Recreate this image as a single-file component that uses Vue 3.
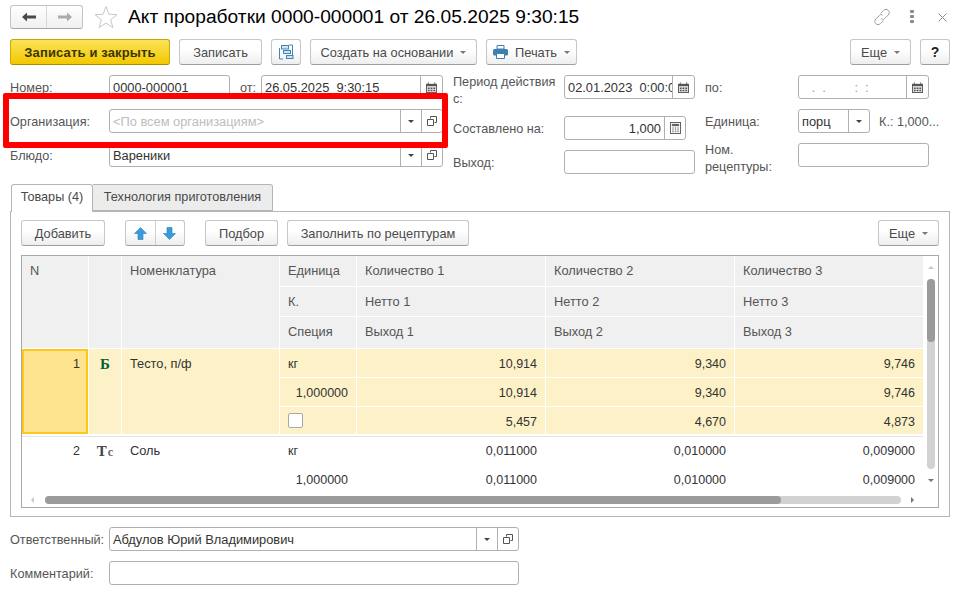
<template>
  <div class="page">
    <header class="head">
      <div class="nav">
        <button class="nav-btn">
          <svg width="14" height="10" viewBox="0 0 14 10"><path d="M0 5 5 0.5V3.5H14V6.5H5V9.5Z" fill="#4a4a4a" /></svg>
        </button>
        <button class="nav-btn">
          <svg width="14" height="10" viewBox="0 0 14 10"><path d="M14 5 9 0.5V3.5H0V6.5H9V9.5Z" fill="#ababab" /></svg>
        </button>
      </div>
      <svg class="star" width="24" height="24" viewBox="0 0 24 24"><path d="M12 1.5 14.9 9.2 23 9.6 16.7 14.7 18.8 22.6 12 18.1 5.200 22.600 7.300 14.700 1 9.600 9.100 9.200Z" fill="none" stroke="#c8c8c8" /></svg>
      <h1 class="title">Акт проработки 0000-000001 от 26.05.2025 9:30:15</h1>
      <div class="win-icons">
        <svg width="18" height="18" viewBox="0 0 18 18" fill="none" stroke="#a0a0a0" stroke-width="1"><path d="M7.500 5.500 10.500 2.500C12 1 14 1 15.300 2.400 16.600 3.800 16.500 5.700 15.200 7L11.500 10.700C10.300 11.800 9 11.600 8.200 10.600" /><path d="M10.500 12.500 7.500 15.500C6 17 4 17 2.700 15.600 1.400 14.200 1.500 12.300 2.800 11L6.500 7.300C7.700 6.200 9 6.400 9.800 7.400" /></svg>
        <svg class="dots" width="4" height="14" viewBox="0 0 4 14"><g fill="#8a8a8a"><rect width="4" height="3" y="0" rx="1" /><rect width="4" height="3" y="5" rx="1" /><rect width="4" height="3" y="10" rx="1" /></g></svg>
        <svg width="9" height="9" viewBox="0 0 9 9"><path d="M.5.500 8.500 8.500M8.500.500.500 8.500" stroke="#8a8a8a" /></svg>
      </div>
    </header>

    <div class="toolbar">
      <button class="btn primary w160">Записать и закрыть</button>
      <button class="btn w83">Записать</button>
      <button class="btn w30">
        <svg width="16" height="16" viewBox="0 0 16 16" fill="#cfe3f3" stroke="#3f87b8"><path d="M1.500 4V15H5M14.500 12V1H11" fill="none" /><rect x="3.500" y="1.500" width="7" height="3.500" /><rect x="5.500" y="6.500" width="7" height="3" /><rect x="8.500" y="11.500" width="6.500" height="3" /></svg>
      </button>
      <button class="btn w167">Создать на основании<i class="caret"></i></button>
      <button class="btn w91">
        <svg class="print" width="15" height="14" viewBox="0 0 15 14"><path d="M4 .500H11V4H4Z" fill="#fff" stroke="#3d7fae" /><rect y="4" width="15" height="6.500" rx="1.500" fill="#3d7fae" /><path d="M3.500 8.500H11.500V13.500H3.500Z" fill="#fff" stroke="#3d7fae" /></svg>Печать<i class="caret"></i>
      </button>
      <button class="btn w61 push">Еще<i class="caret"></i></button>
      <button class="btn w30 help">?</button>
    </div>

    <section class="form">
      <div class="col col-main">
        <div class="line">
          <label class="lbl w99">Номер:</label>
          <div class="field w121"><span class="val">0000-000001</span></div>
          <label class="lbl from">от:</label>
          <div class="field w182">
            <span class="val">26.05.2025&nbsp; 9:30:15</span>
            <span class="addon a22"><svg class="ico" width="11" height="11" viewBox="0 0 12 12"><use href="#cal" /></svg></span>
          </div>
        </div>
        <div class="line">
          <label class="lbl w99">Организация:</label>
          <div class="field w334">
            <span class="val ghost">&lt;По всем организациям&gt;</span>
            <span class="addon a21"><i class="caret dark"></i></span>
            <span class="addon a21"><svg width="10" height="10" viewBox="0 0 10 10" fill="none" stroke="#555"><path d="M3.500 2.500V.500H9.500V6.500H7.500M.500 3.500H6.500V9.500H.500Z" /></svg></span>
          </div>
        </div>
        <div class="line">
          <label class="lbl w99">Блюдо:</label>
          <div class="field w334">
            <span class="val">Вареники</span>
            <span class="addon a21"><i class="caret dark"></i></span>
            <span class="addon a21"><svg width="10" height="10" viewBox="0 0 10 10" fill="none" stroke="#555"><path d="M3.500 2.500V.500H9.500V6.500H7.500M.500 3.500H6.500V9.500H.500Z" /></svg></span>
          </div>
        </div>
      </div>

      <div class="col col-mid">
        <div class="line">
          <label class="lbl lbl-two w111">Период действия<br>с:</label>
          <div class="field w131">
            <span class="val clip">02.01.2023&nbsp; 0:00:00</span>
            <span class="addon a22"><svg class="ico" width="11" height="11" viewBox="0 0 12 12"><use href="#cal" /></svg></span>
          </div>
        </div>
        <div class="line mid-2">
          <label class="lbl w111">Составлено на:</label>
          <div class="field w122">
            <span class="val right">1,000</span>
            <span class="addon a21"><svg width="11" height="12" viewBox="0 0 12 13" fill="none" stroke="#555"><rect x=".5" y=".5" width="11" height="12" /><path d="M2.500 2.500H9.500V4H2.500Z" fill="#555" /><path d="M2.500 6.500H4M5.300 6.500H6.800M8 6.500H9.500M2.500 8.500H4M5.300 8.500H6.800M8 8.500H9.500M2.500 10.500H4M5.300 10.500H6.800M8 10.500H9.500" /></svg></span>
          </div>
        </div>
        <div class="line">
          <label class="lbl w111">Выход:</label>
          <div class="field w131"></div>
        </div>
      </div>

      <div class="col">
        <div class="line">
          <label class="lbl w93">по:</label>
          <div class="field w131">
            <span class="val date-empty">&nbsp;. &nbsp;. &nbsp; &nbsp; &nbsp; &nbsp;: &nbsp;:</span>
            <span class="addon a22"><svg class="ico" width="11" height="11" viewBox="0 0 12 12"><use href="#cal" /></svg></span>
          </div>
        </div>
        <div class="line">
          <label class="lbl w93">Единица:</label>
          <div class="field w72">
            <span class="val">порц</span>
            <span class="addon a21"><i class="caret dark"></i></span>
          </div>
          <span class="lbl coef">К.: 1,000...</span>
        </div>
        <div class="line">
          <label class="lbl lbl-rec w93">Ном.<br>рецептуры:</label>
          <div class="field w131"></div>
        </div>
      </div>
    </section>

    <div class="tabs">
      <div class="tab active">Товары (4)</div>
      <div class="tab">Технология приготовления</div>
    </div>

    <section class="panel">
      <div class="panel-bar">
        <button class="btn w84">Добавить</button>
        <div class="pair">
          <button class="pair-btn">
            <svg width="13" height="13" viewBox="0 0 13 13"><path d="M6.500.500 12.500 6.500H9V12.500H4V6.500H.5Z" fill="#3a9bdc" stroke="#2a7fb8" stroke-width=".6" /></svg>
          </button>
          <button class="pair-btn">
            <svg width="13" height="13" viewBox="0 0 13 13"><path d="M6.500 12.500 12.500 6.500H9V.500H4V6.500H.5Z" fill="#3a9bdc" stroke="#2a7fb8" stroke-width=".6" /></svg>
          </button>
        </div>
        <button class="btn w73">Подбор</button>
        <button class="btn w182">Заполнить по рецептурам</button>
        <button class="btn w61 push">Еще<i class="caret"></i></button>
      </div>

      <div class="table">
        <div class="table-main">
          <div class="view">
            <div class="grid">
              <div class="hd tall">N</div>
              <div class="hd tall"></div>
              <div class="hd tall">Номенклатура</div>
              <template v-for="(row, r) in headRows" :key="r">
                <div v-for="c in row" :key="c" class="hd">{{ c }}</div>
              </template>
            </div>
            <div class="grid rows first">
              <div class="cell num-cell current tall">1</div>
              <div class="cell kind tall sel green">Б</div>
              <div class="cell name tall sel">Тесто, п/ф</div>
              <template v-for="(row, r) in firstRows" :key="r">
                <div class="cell sel" :class="{ num: r === 1 }">
                  <i v-if="r === 2" class="check"></i>
                  <template v-else>{{ row[0] }}</template>
                </div>
                <div v-for="(v, i) in row.slice(1)" :key="i" class="cell sel num">{{ v }}</div>
              </template>
            </div>
            <div class="grid rows second">
              <div class="cell num-plain tall">2</div>
              <div class="cell kind tall">Т<span class="kind-sm">с</span></div>
              <div class="cell name tall">Соль</div>
              <template v-for="(row, r) in secondRows" :key="r">
                <div class="cell" :class="{ num: r === 1 }">{{ row[0] }}</div>
                <div v-for="(v, i) in row.slice(1)" :key="i" class="cell num">{{ v }}</div>
              </template>
            </div>
          </div>
          <div class="vscroll">
            <i class="tri up"></i>
            <div class="vtrack"><div class="vthumb"></div></div>
            <i class="tri down"></i>
          </div>
        </div>
        <div class="hscroll">
          <i class="tri left"></i>
          <div class="htrack"><div class="hthumb"></div></div>
          <i class="tri right"></i>
        </div>
      </div>
    </section>

    <footer class="foot">
      <div class="line">
        <label class="lbl w99">Ответственный:</label>
        <div class="field w410">
          <span class="val">Абдулов Юрий Владимирович</span>
          <span class="addon a21"><i class="caret dark"></i></span>
          <span class="addon a21"><svg width="10" height="10" viewBox="0 0 10 10" fill="none" stroke="#555"><path d="M3.500 2.500V.500H9.500V6.500H7.500M.500 3.500H6.500V9.500H.500Z" /></svg></span>
        </div>
      </div>
      <div class="line">
        <label class="lbl w99">Комментарий:</label>
        <div class="field w410"></div>
      </div>
    </footer>

    <div class="red-frame"></div>

    <svg class="defs" width="0" height="0">
      <symbol id="cal" viewBox="0 0 12 12">
        <path d="M0 2H12V12H0Z" fill="#555" />
        <path d="M2.500 0.500V3M9.500 .5V3" stroke="#555" />
        <path d="M1 4.500H11V11H1Z" fill="#e8e8e8" />
        <path d="M2 6H4V7.500H2ZM5 6H7V7.500H5ZM8 6H10V7.500H8ZM2 8.500H4V10H2ZM5 8.500H7V10H5ZM8 8.500H10V10H8Z" fill="#555" />
      </symbol>
    </svg>
  </div>
</template>

<script setup>
const headRows = [
  ['Единица', 'Количество 1', 'Количество 2', 'Количество 3'],
  ['К.', 'Нетто 1', 'Нетто 2', 'Нетто 3'],
  ['Специя', 'Выход 1', 'Выход 2', 'Выход 3']
]

const firstRows = [
  ['кг', '10,914', '9,340', '9,746'],
  ['1,000000', '10,914', '9,340', '9,746'],
  ['', '5,457', '4,670', '4,873']
]

const secondRows = [
  ['кг', '0,011000', '0,010000', '0,009000'],
  ['1,000000', '0,011000', '0,010000', '0,009000'],
  ['', '', '', '']
]
</script>

<style>
html, body { margin: 0; background: #fff; }
</style>

<style scoped>
.page {
  position: relative;
  width: 963px;
  height: 594px;
  overflow: hidden;
  padding: 5px 13px 0 10px;
  box-sizing: border-box;
  font-family: "Liberation Sans", Arial, sans-serif;
  font-size: 13px;
  color: #333;
  background: #fff;
}

button { font-family: inherit; margin: 0; }

.head { display: flex; align-items: center; height: 24px; }

.nav {
  display: flex;
  width: 73px;
  height: 24px;
  box-sizing: border-box;
  border: 1px solid #c4c4c4;
  border-bottom-color: #a8a8a8;
  border-radius: 3px;
  background: linear-gradient(#fff, #f0f0f0);
}
.nav-btn {
  flex: 1;
  padding: 0;
  border: 0;
  background: none;
  display: flex;
  align-items: center;
  justify-content: center;
}
.nav-btn + .nav-btn { border-left: 1px solid #d8d8d8; }

.star { margin-left: 11px; flex: none; }

.title {
  margin: 0 0 0 10px;
  font-size: 19.200px;
  font-weight: 400;
  color: #000;
  white-space: nowrap;
}

.win-icons { margin-left: auto; display: flex; align-items: center; margin-right: 3px; }
.dots { margin: 0 24px 0 19px; }

.toolbar { display: flex; gap: 9px; height: 26px; margin-top: 10px; }

.btn {
  height: 26px;
  padding: 0;
  box-sizing: border-box;
  display: inline-flex;
  align-items: center;
  justify-content: center;
  flex: none;
  border: 1px solid #c6c6c6;
  border-bottom-color: #9f9f9f;
  border-radius: 3px;
  background: linear-gradient(#fff 40%, #eeeeee);
  color: #4a4a4a;
  font-size: 12.800px;
  white-space: nowrap;
}
.primary {
  border-color: #c9a800;
  border-bottom-color: #a88c00;
  background: linear-gradient(#fbe35a, #f3c800);
  color: #3d3500;
  font-weight: 700;
  font-size: 13px;
  letter-spacing: .15px;
}
.help { color: #222; font-weight: 700; font-size: 14px; }
.print { margin-right: 7px; }
.push { margin-left: auto; }

.w30 { width: 30px; }
.w61 { width: 61px; }
.w73 { width: 73px; }
.w83 { width: 83px; }
.w84 { width: 84px; }
.w91 { width: 91px; }
.w160 { width: 160px; }
.w167 { width: 167px; }
.w182 { width: 182px; }

.caret {
  display: inline-block;
  margin-left: 7px;
  border: 3px solid transparent;
  border-top: 3px solid #777;
  border-bottom: 0;
}
.caret.dark { margin: 0; border-top-color: #444; }

.form { display: flex; margin-top: 10px; height: 100px; }

.col { display: flex; flex-direction: column; gap: 10px; }
.col-main { width: 443px; }
.col-mid { width: 252px; margin-right: 0; gap: 0; }
.mid-2 { margin: 17px 0 10px; }

.line { display: flex; align-items: center; height: 24px; }

.lbl {
  flex: none;
  padding-top: 2px;
  color: #555;
  font-size: 12.700px;
  white-space: nowrap;
  line-height: 17px;
}
.w93 { width: 93px; }
.w99 { width: 99px; }
.w111 { width: 111px; }
.from { width: 21px; margin-left: 10px; box-sizing: border-box; }
.col-mid .lbl-two { margin-top: 6px; }
.lbl-rec { margin-top: 6px; }
.coef { margin-left: 9px; }

.field {
  flex: none;
  display: flex;
  align-items: stretch;
  height: 24px;
  box-sizing: border-box;
  border: 1px solid #b0b0b0;
  border-radius: 3px;
  background: #fff;
}
.w72 { width: 72px; }
.w121 { width: 121px; }
.w122 { width: 122px; }
.w131 { width: 131px; }
.w334 { width: 334px; }
.w410 { width: 410px; }

.val {
  flex: 1;
  min-width: 0;
  padding: 0 4px 0 3px;
  font-size: 12.850px;
  line-height: 24px;
  color: #333;
  white-space: nowrap;
  overflow: hidden;
}
.ghost { color: #bdbdbd; }
.right { text-align: right; padding-right: 3px; }
.date-empty { color: #999; padding-left: 9px; }

.addon {
  flex: none;
  display: flex;
  align-items: center;
  justify-content: center;
  border-left: 1px solid #b0b0b0;
}
.a21 { width: 20px; }
.a22 { width: 21px; }
.ico { display: block; }

.tabs { display: flex; margin: 9px 0 0 1px; height: 28px; font-size: 12.700px; position: relative; z-index: 1; }
.tab {
  width: 180px;
  box-sizing: border-box;
  height: 27px;
  border: 1px solid #b5b5b5;
  border-left: 0;
  border-radius: 0 3px 0 0;
  background: #ececec;
  line-height: 25px;
  text-align: center;
  color: #4a4a4a;
}
.tab.active {
  width: 82px;
  height: 28px;
  border-left: 1px solid #b5b5b5;
  border-bottom: 0;
  border-radius: 3px 3px 0 0;
  background: #fff;
}

.panel {
  height: 306px;
  margin-top: -1px;
  box-sizing: border-box;
  padding: 8px 10px;
  border: 1px solid #b5b5b5;
}

.panel-bar { display: flex; gap: 9px; height: 26px; }

.pair {
  display: flex;
  width: 60px;
  height: 26px;
  margin: 0 11px;
  box-sizing: border-box;
  border: 1px solid #c6c6c6;
  border-bottom-color: #9f9f9f;
  border-radius: 3px;
  background: linear-gradient(#fff 40%, #eeeeee);
}
.pair-btn {
  flex: 1;
  padding: 0;
  border: 0;
  background: none;
  display: flex;
  align-items: center;
  justify-content: center;
}
.pair-btn + .pair-btn { border-left: 1px solid #d0d0d0; }

.table {
  height: 253px;
  margin-top: 9px;
  box-sizing: border-box;
  border: 1px solid #a8a8a8;
  display: flex;
  flex-direction: column;
}
.table-main { display: flex; height: 234px; }
.view { width: 901px; overflow: hidden; flex: none; }

.grid {
  display: grid;
  grid-template-columns: 66px 32px 157px 76px 188px 188px 188px;
  grid-template-rows: 30px 29px 31px;
  gap: 1px;
  padding-bottom: 1px;
  box-sizing: content-box;
  width: 901px;
  margin-top: 0;
  background: #fff;
}
.tall { grid-row: 1 / span 3; }

.hd {
  background: #f0f0f0;
  padding: 0 8px;
  line-height: 29px;
  font-size: 12.800px;
  color: #555;
  white-space: nowrap;
}
.tall.hd { grid-row: 1 / span 3; }

.rows { grid-template-rows: 28px 28px 27px; }
.first { padding-bottom: 2px; border-bottom: 1px solid #e3e3e3; }
.first .cell { line-height: 30px; }
.first .current { line-height: 26px; }
.second { margin-top: 0; }

.cell {
  padding: 0 8px;
  line-height: 28px;
  font-size: 12.500px;
  color: #333;
  white-space: nowrap;
  min-width: 0;
}
.name { font-size: 12.800px; }
.sel { background: #fdf2c7; }
.num { text-align: right; }

.current {
  background: #fee48f;
  border: 2px solid #fcc820;
  box-sizing: border-box;
  text-align: right;
  padding-right: 6px;
}
.num-plain { text-align: right; }

.kind {
  padding: 0;
  text-align: center;
  font-family: "Liberation Serif", serif;
  font-weight: 700;
  font-size: 15px;
  color: #444;
}
.kind-sm { font-size: 12px; margin-left: 1px; color: #666; }
.green { color: #0b5c39; }

.check {
  display: block;
  width: 15px;
  height: 15px;
  margin-top: 6px;
  box-sizing: border-box;
  border: 1px solid #a8a8a8;
  border-radius: 2px;
  background: #fff;
}

.vscroll {
  width: 15px;
  flex: none;
  display: flex;
  flex-direction: column;
  align-items: center;
  padding-top: 10px;
  box-sizing: border-box;
}
.vtrack {
  width: 8px;
  height: 190px;
  margin: 10px 0;
  border-radius: 4px;
  background: #d2d2d2;
}
.vthumb { height: 63px; border-radius: 4px; background: #9b9b9b; }

.hscroll {
  display: flex;
  align-items: center;
  height: 17px;
  padding: 2px 0 0 9px;
  box-sizing: border-box;
}
.htrack {
  width: 856px;
  height: 8px;
  margin-left: 11px;
  border-radius: 4px;
  background: #d2d2d2;
}
.hthumb { width: 736px; height: 8px; border-radius: 4px; background: #9b9b9b; }

.tri { display: block; width: 0; height: 0; border: 3px solid transparent; flex: none; }
.tri.up { border-top: 0; border-bottom: 3px solid #c8c8c8; }
.tri.down { border-bottom: 0; border-top: 3px solid #777; }
.tri.left { border-left: 0; border-right: 3px solid #c8c8c8; }
.tri.right { border-right: 0; border-left: 3px solid #777; margin-left: 10px; }

.foot { display: flex; flex-direction: column; gap: 10px; margin-top: 10px; }

.red-frame {
  position: absolute;
  left: 3px;
  top: 93px;
  width: 445px;
  height: 55px;
  box-sizing: border-box;
  border: 6px solid #ff0000;
  border-radius: 2px;
  pointer-events: none;
}

.defs { position: absolute; }
</style>
